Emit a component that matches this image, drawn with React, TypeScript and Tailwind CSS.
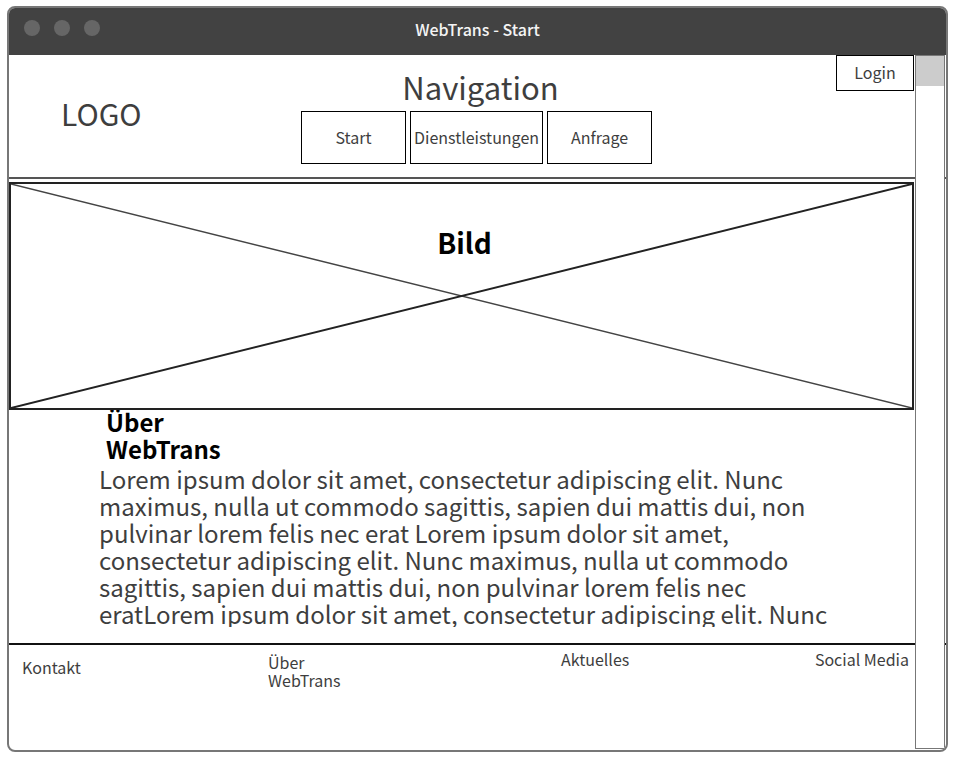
const navItems = [
  { label: 'Start', width: 'w-[105px]' },
  { label: 'Dienstleistungen', width: 'w-[133px]' },
  { label: 'Anfrage', width: 'w-[105px]' },
];

function TitleBar() {
  return (
    <div className="relative flex h-[47px] items-start justify-center bg-[#424242] pt-[9px]">
      <div className="absolute left-[15px] top-3 flex gap-[14px]">
        <span className="size-4 rounded-full bg-[#666]" />
        <span className="size-4 rounded-full bg-[#666]" />
        <span className="size-4 rounded-full bg-[#666]" />
      </div>
      <h1 className="text-base/6 font-medium text-[#f4f4f4]">WebTrans - Start</h1>
    </div>
  );
}

function Header() {
  return (
    <header className="grid h-[124px] grid-cols-[1fr_auto_1fr] border-b-2 border-[#555] pr-8">
      <div className="pl-[52px] pt-[38px] text-[30px] leading-10">LOGO</div>
      <nav aria-labelledby="nav-title" className="ml-[30px] flex flex-col items-center pt-3">
        <h2 id="nav-title" className="pl-2 text-[31px] leading-10">
          Navigation
        </h2>
        <div className="mt-1 flex gap-1">
          {navItems.map((item) => (
            <button
              key={item.label}
              type="button"
              className={`h-[53px] whitespace-nowrap border border-black bg-white pb-0.5 text-base ${item.width}`}
            >
              {item.label}
            </button>
          ))}
        </div>
      </nav>
      <button
        type="button"
        className="h-9 w-[78px] justify-self-end border border-black bg-white pb-0.5 text-base"
      >
        Login
      </button>
    </header>
  );
}

function ImagePlaceholder() {
  return (
    <div className="relative mr-8 mt-[3px] flex h-[228px] justify-center border-2 border-[#222] pl-1.5 pt-[38px]">
      <svg
        className="absolute inset-0 size-full"
        viewBox="0 0 100 100"
        preserveAspectRatio="none"
        aria-hidden="true"
      >
        <line x1="0" y1="0" x2="100" y2="100" stroke="#444" strokeWidth="1.5" vectorEffect="non-scaling-stroke" />
        <line x1="0" y1="100" x2="100" y2="0" stroke="#222" strokeWidth="2" vectorEffect="non-scaling-stroke" />
      </svg>
      <h2 className="relative text-[28px] font-bold leading-10 text-black">Bild</h2>
    </div>
  );
}

function About() {
  return (
    <section className="-mt-0.5 h-[235px] pl-[90px] pr-[100px]">
      <h2 className="w-32 pl-[7px] text-2xl/[27px] font-bold text-black">Über WebTrans</h2>
      <p className="mt-[3px] h-[162px] overflow-hidden text-2xl/[27px]">
        Lorem ipsum dolor sit amet, consectetur adipiscing elit. Nunc maximus, nulla ut commodo
        sagittis, sapien dui mattis dui, non pulvinar lorem felis nec erat Lorem ipsum dolor sit
        amet, consectetur adipiscing elit. Nunc maximus, nulla ut commodo sagittis, sapien dui
        mattis dui, non pulvinar lorem felis nec eratLorem ipsum dolor sit amet, consectetur
        adipiscing elit. Nunc
      </p>
    </section>
  );
}

function Footer() {
  return (
    <footer className="grid h-[107px] grid-cols-[246fr_293fr_348fr] border-t-2 border-[#111] pl-[13px] pr-[37px] text-base/[18px]">
      <a href="#kontakt" className="pt-[13px]">
        Kontakt
      </a>
      <a href="#ueber" className="w-20 pt-2">
        Über WebTrans
      </a>
      <div className="flex justify-between pt-[5px]">
        <a href="#aktuelles">Aktuelles</a>
        <a href="#social">Social Media</a>
      </div>
    </footer>
  );
}

export default function App() {
  return (
    <div className="bg-white pb-1 pl-[7px] pr-[5px] pt-[6px] font-['Noto_Sans_CJK_JP','Noto_Sans',sans-serif] text-[#3e3e3e]">
      <div className="overflow-hidden rounded-lg border-2 border-[#777]">
        <TitleBar />
        <div className="relative">
          <main>
            <Header />
            <ImagePlaceholder />
            <About />
          </main>
          <Footer />
          <div className="absolute bottom-px right-px top-0 w-[30px] border border-[#777] bg-white">
            <div className="h-[30px] bg-[#ccc]" />
          </div>
        </div>
      </div>
    </div>
  );
}
